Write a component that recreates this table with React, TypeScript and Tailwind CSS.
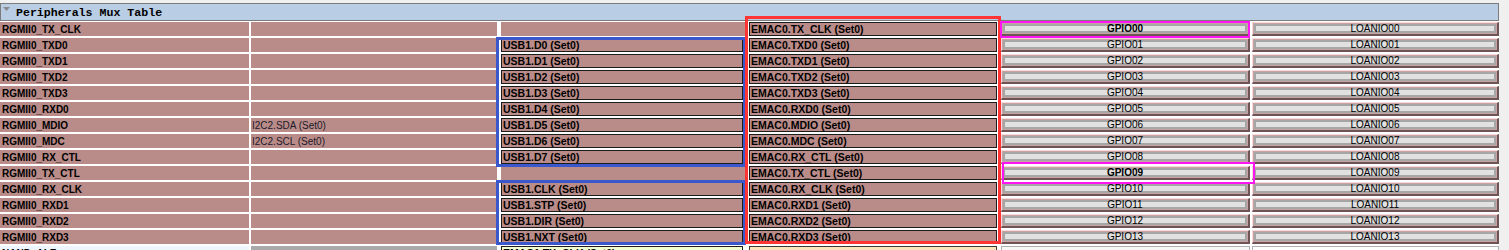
const rows = [
  { pin: 'RGMII0_TX_CLK', i2c: '', usb: '', emac: 'EMAC0.TX_CLK (Set0)' },
  { pin: 'RGMII0_TXD0', i2c: '', usb: 'USB1.D0 (Set0)', emac: 'EMAC0.TXD0 (Set0)' },
  { pin: 'RGMII0_TXD1', i2c: '', usb: 'USB1.D1 (Set0)', emac: 'EMAC0.TXD1 (Set0)' },
  { pin: 'RGMII0_TXD2', i2c: '', usb: 'USB1.D2 (Set0)', emac: 'EMAC0.TXD2 (Set0)' },
  { pin: 'RGMII0_TXD3', i2c: '', usb: 'USB1.D3 (Set0)', emac: 'EMAC0.TXD3 (Set0)' },
  { pin: 'RGMII0_RXD0', i2c: '', usb: 'USB1.D4 (Set0)', emac: 'EMAC0.RXD0 (Set0)' },
  { pin: 'RGMII0_MDIO', i2c: 'I2C2.SDA (Set0)', usb: 'USB1.D5 (Set0)', emac: 'EMAC0.MDIO (Set0)' },
  { pin: 'RGMII0_MDC', i2c: 'I2C2.SCL (Set0)', usb: 'USB1.D6 (Set0)', emac: 'EMAC0.MDC (Set0)' },
  { pin: 'RGMII0_RX_CTL', i2c: '', usb: 'USB1.D7 (Set0)', emac: 'EMAC0.RX_CTL (Set0)' },
  { pin: 'RGMII0_TX_CTL', i2c: '', usb: '', emac: 'EMAC0.TX_CTL (Set0)' },
  { pin: 'RGMII0_RX_CLK', i2c: '', usb: 'USB1.CLK (Set0)', emac: 'EMAC0.RX_CLK (Set0)' },
  { pin: 'RGMII0_RXD1', i2c: '', usb: 'USB1.STP (Set0)', emac: 'EMAC0.RXD1 (Set0)' },
  { pin: 'RGMII0_RXD2', i2c: '', usb: 'USB1.DIR (Set0)', emac: 'EMAC0.RXD2 (Set0)' },
  { pin: 'RGMII0_RXD3', i2c: '', usb: 'USB1.NXT (Set0)', emac: 'EMAC0.RXD3 (Set0)' }
]

// rows whose GPIO is picked
const selected = [0, 9]

function Plain({ text, bold }: { text: string; bold?: boolean }) {
  return (
    <div
      className={
        bold
          ? 'h-[14px] bg-[#ba8c89] pl-[2px] text-[10px] font-bold leading-[16px] whitespace-nowrap overflow-hidden'
          : 'h-[14px] bg-[#ba8c89] pl-px text-[10px] text-[#1a1a2a] leading-[16px] whitespace-nowrap overflow-hidden'
      }
    >
      {text}
    </div>
  )
}

function Boxed({ text }: { text: string }) {
  if (!text) return <div className="h-[14px] bg-[#ba8c89] ml-[2px]" />
  return (
    <div className="h-[14px] ml-[2px] mr-[2px] bg-[#ba8c89] border border-[#1c1c1c] pl-px text-[10.5px] font-bold leading-[13px] whitespace-nowrap overflow-hidden">
      {text}
    </div>
  )
}

function Button({ text, bold }: { text: string; bold?: boolean }) {
  return (
    <div className="h-[14px] bg-[#c9a3a3] border-t border-l border-[#f6d8d8] border-r-2 border-b-2 border-r-[#6e5454] border-b-[#6e5454] p-px">
      <div
        className={
          bold
            ? 'h-full bg-[#e1e1e1] border-2 border-[#a6a6a6] flex items-center justify-center text-[10px] font-bold leading-none whitespace-nowrap'
            : 'h-full bg-[#e1e1e1] border-2 border-[#a6a6a6] flex items-center justify-center text-[10px] leading-none whitespace-nowrap'
        }
      >
        {text}
      </div>
    </div>
  )
}

export default function App() {
  return (
    <div className="relative h-[250px] w-[1509px] overflow-hidden bg-[#f0f0f0] text-black font-['Liberation_Sans',Arial,sans-serif]">
      <div className="w-[1499px] pt-[3px]">
        <div className="h-[18px] bg-[#b9cde5] border border-[#7c7c7c] flex items-center">
          <svg width="8" height="6" viewBox="0 0 8 6" className="ml-[2px] -mt-[4px]">
            <path d="M0 0 L7 0 L3.5 4 Z" fill="#8a8a8a" />
          </svg>
          <span className="ml-[5px] mt-px font-['Liberation_Mono',monospace] text-[11.6px] font-bold leading-none">
            Peripherals Mux Table
          </span>
        </div>

        <div className="bg-white pt-px grid grid-cols-[249px_246px_246px_252px_249px_247px] gap-[2px]">
          {rows.map((r, i) => (
            <div key={r.pin} className="contents">
              <Plain text={r.pin} bold />
              <Plain text={r.i2c} />
              <Boxed text={r.usb} />
              <Boxed text={r.emac} />
              <Button
                text={`GPIO${String(i).padStart(2, '0')}`}
                bold={selected.includes(i)}
              />
              <Button text={`LOANIO${String(i).padStart(2, '0')}`} />
            </div>
          ))}

          {/* next block, cut off by the window */}
          <div className="h-[14px] bg-[#eef5fd] pl-[2px] text-[10px] font-bold leading-[16px]">NAND_ALE</div>
          <div className="h-[14px] bg-[#a9a9a9]" />
          <div className="h-[14px] ml-[2px] mr-[2px] bg-[#f3fdd2] border border-[#1c1c1c] pl-px text-[10.5px] font-bold leading-[13px] whitespace-nowrap">
            EMAC1.TX_CLK (Set0)
          </div>
          <div className="h-[14px] ml-[2px] mr-[2px] bg-[#fde4bd] border border-[#3a3a3a]" />
          <div className="h-[14px] bg-[#f8f8f8] border border-[#b0b0b0]" />
          <div className="h-[14px] bg-white border border-[#b0b0b0]" />
        </div>
      </div>

      {/* highlight frames */}
      <div className="absolute left-[496px] top-[37px] w-[250px] h-[130px] border-[3px] border-[#3a58cc]" />
      <div className="absolute left-[496px] top-[180px] w-[250px] h-[65px] border-[3px] border-[#3a58cc]" />
      <div className="absolute left-[745px] top-[16px] w-[256px] h-[228px] border-[3px] border-[#ff3434]" />
      <div className="absolute left-[1000px] top-[21px] w-[250px] h-[17px] border-2 border-[#ff14f4]" />
      <div className="absolute left-[1002px] top-[162px] w-[253px] h-[22px] border-2 border-[#ff14f4]" />
    </div>
  )
}
